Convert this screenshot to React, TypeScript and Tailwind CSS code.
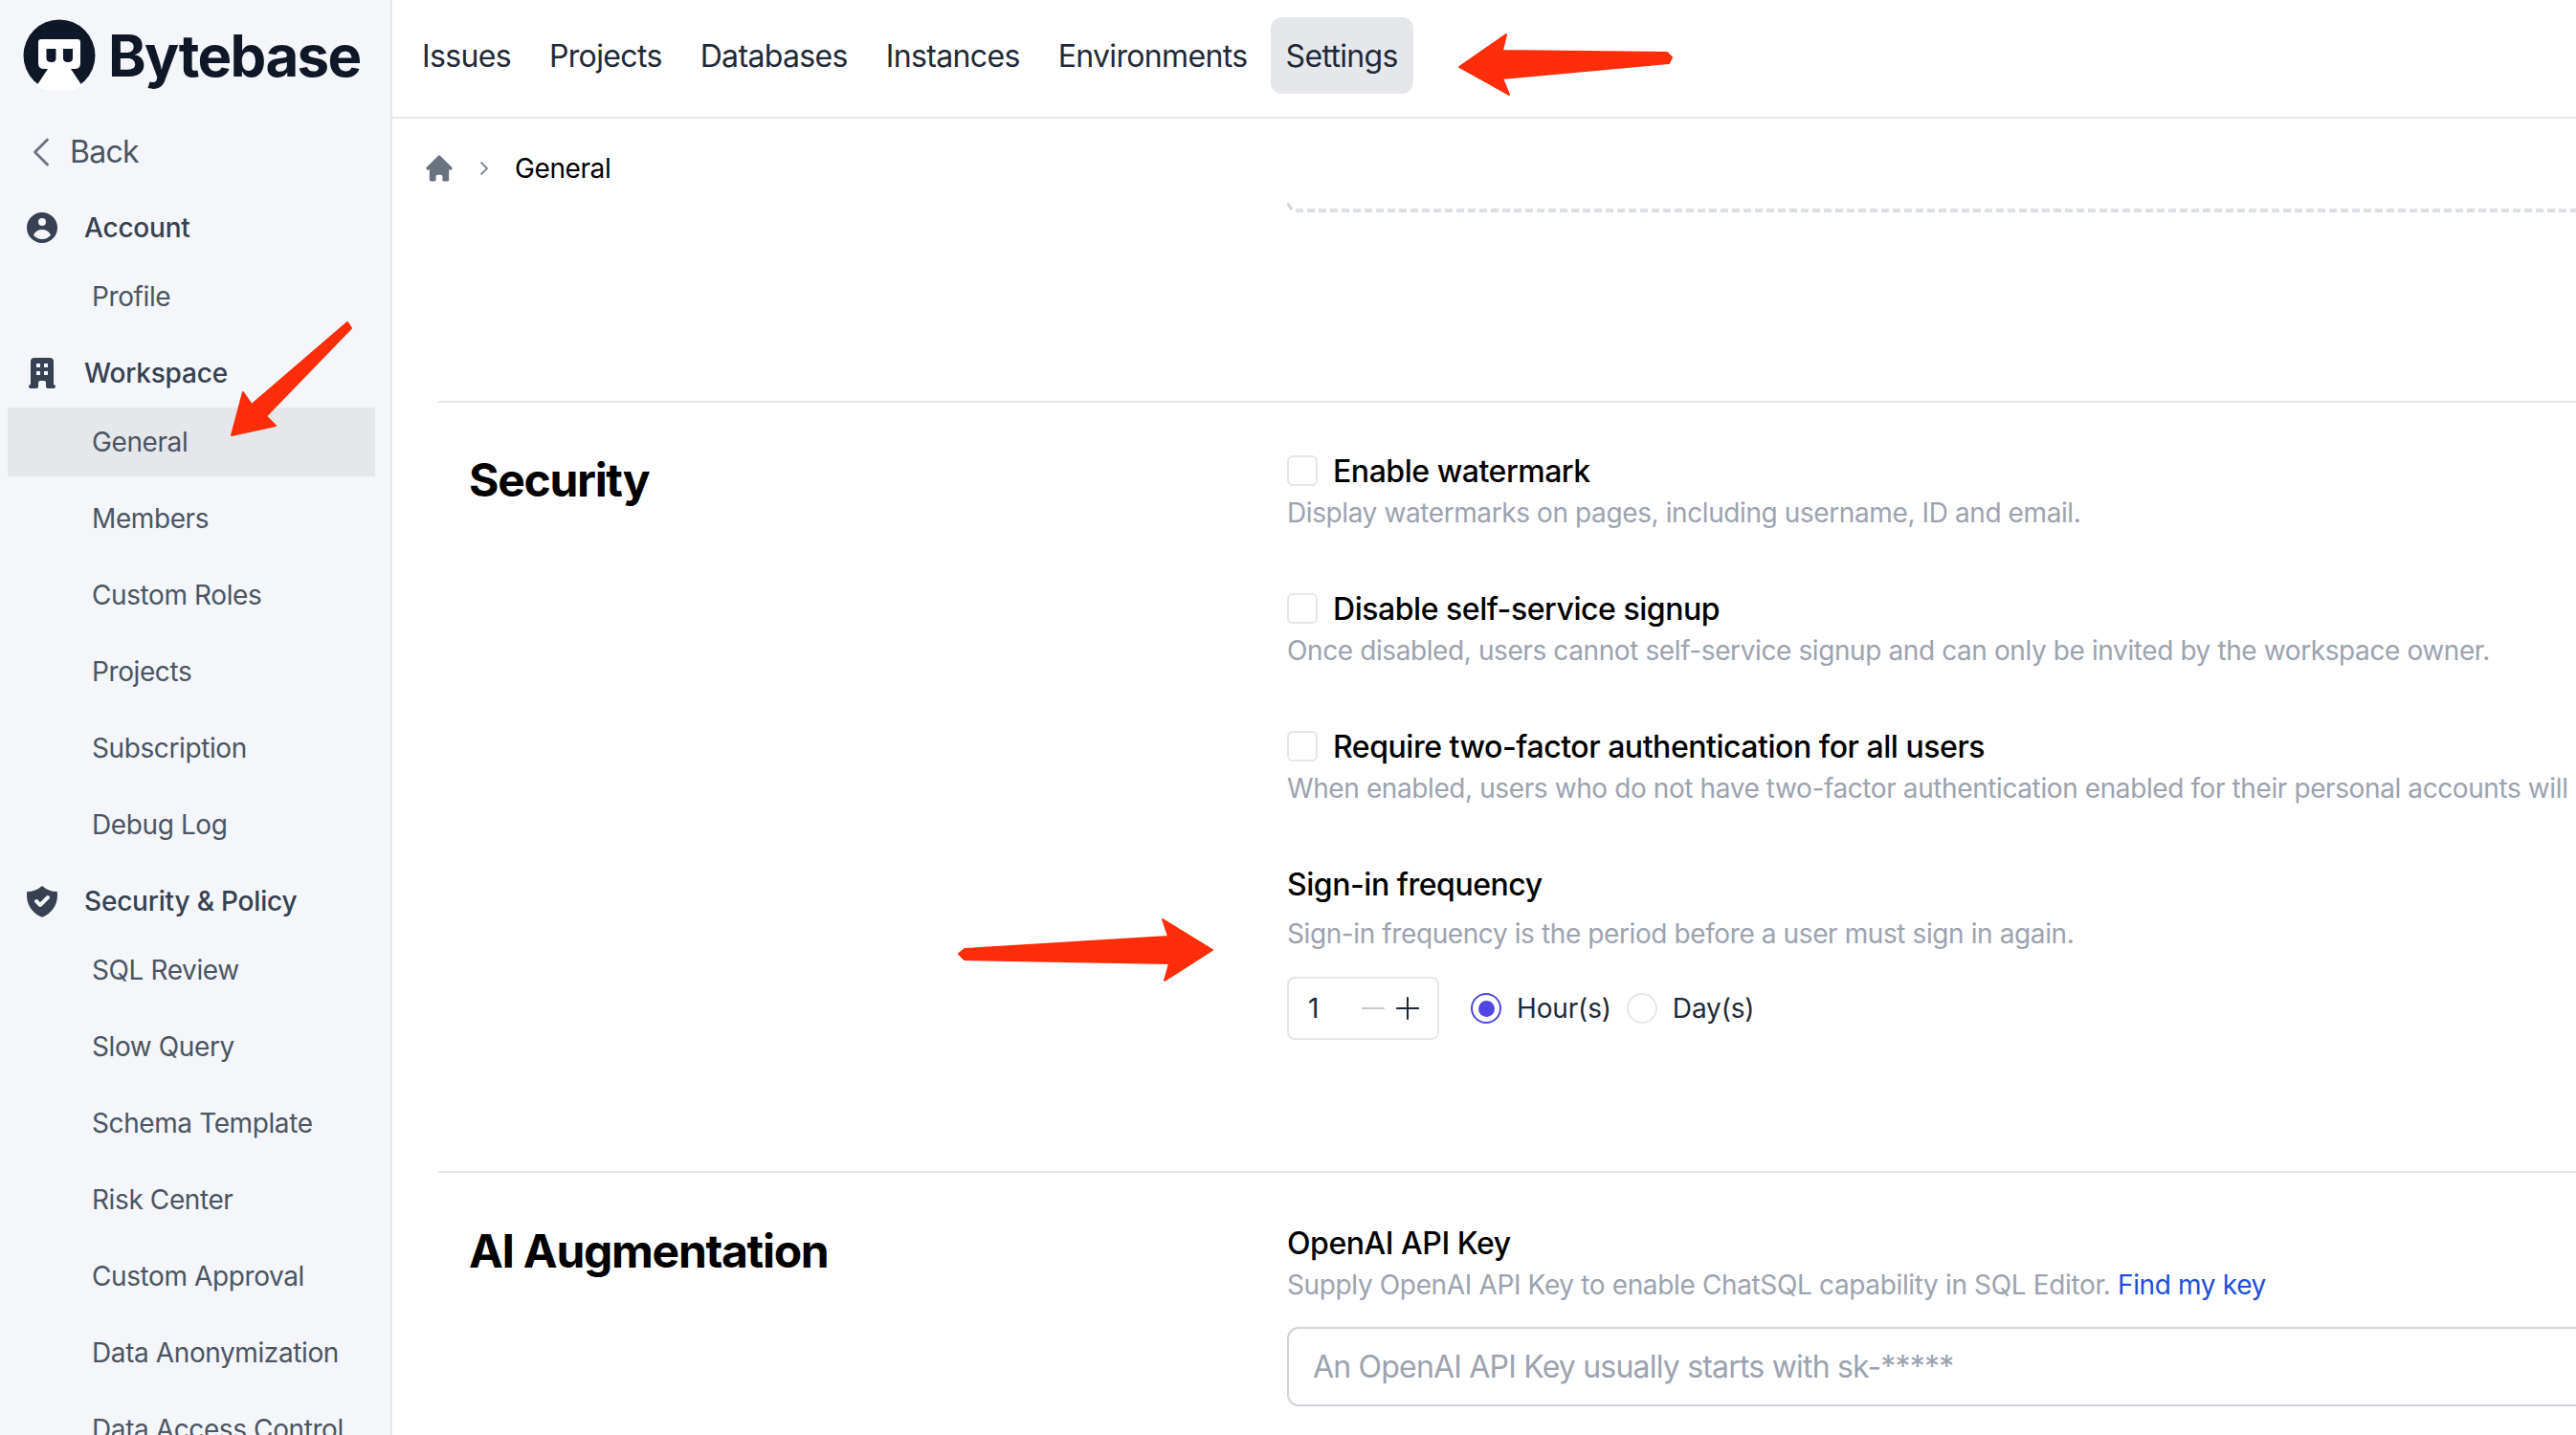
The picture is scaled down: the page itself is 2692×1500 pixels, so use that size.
import React from "react";
import { HiUserCircle, HiOfficeBuilding, HiShieldCheck, HiHome } from "react-icons/hi";
import { ChevronLeft, ChevronRight, Minus, Plus } from "lucide-react";

function Logo() {
  return (
    <svg width="76" height="76" viewBox="0 0 76 76" className="shrink-0">
      <circle cx="38" cy="38" r="37.5" fill="#101828" />
      <path d="M16 24 Q16 21 19 21 L57 21 Q60 21 60 24 L60 46 Q60 52 54 52 L50 52 L62 70 Q50 76 38 76 Q26 76 14 70 L26 52 L22 52 Q16 52 16 46 Z" fill="#fff" />
      <path d="M24.5 31 L34.5 31 L34.5 41 Q34.5 45 30 45 Q24.5 45 24.5 41 Z" fill="#101828" />
      <path d="M42 31 L52 31 L52 41 Q52 45 47 45 Q42 45 42 41 Z" fill="#101828" />
    </svg>
  );
}

function Group({ icon, label }: { icon: React.ReactNode; label: string }) {
  return (
    <div className="flex h-[72px] shrink-0 items-center text-[28px] font-medium tracking-[-0.2px] text-[#374151]">
      <span className="flex w-[88px] shrink-0 justify-center">{icon}</span>
      <span>{label}</span>
    </div>
  );
}

function Item({ label, active, top }: { label: string; active?: boolean; top?: boolean }) {
  return (
    <div
      className={
        "flex h-[72px] w-[384px] shrink-0 items-center pl-[88px] text-[28px] tracking-[-0.4px] text-[#4b5563] " +
        (active ? "bg-[#e5e7eb] " : "") +
        (top ? "mt-2" : "")
      }
    >
      {label}
    </div>
  );
}

function Sidebar() {
  return (
    <aside className="flex h-[1500px] w-[410px] shrink-0 flex-col overflow-hidden border-r-2 border-[#e5e7eb] bg-[#f4f6f9] pl-2">
      <div className="-ml-2 flex h-[114px] shrink-0 items-start gap-[13px] pl-[24px] pt-[20px]">
        <Logo />
        <span className="text-[60px] leading-[76px] font-bold tracking-[-1.6px] text-[#101828]">Bytebase</span>
      </div>
      <div className="-ml-2 flex h-[88px] shrink-0 items-center pl-[17px] pt-[2px] text-[32px] tracking-[-0.7px] text-[#4b5563]">
        <ChevronLeft size={52} strokeWidth={1.3} className="mr-[4px] text-[#6b7280]" />
        Back
      </div>
      <div className="-ml-2 shrink-0">
        <Group icon={<HiUserCircle size={40} />} label="Account" />
      </div>
      <Item label="Profile" />
      <div className="-ml-2 mt-2 shrink-0">
        <Group icon={<HiOfficeBuilding size={40} />} label="Workspace" />
      </div>
      <Item label="General" active />
      <Item label="Members" top />
      <Item label="Custom Roles" top />
      <Item label="Projects" top />
      <Item label="Subscription" top />
      <Item label="Debug Log" top />
      <div className="-ml-2 mt-2 shrink-0">
        <Group icon={<HiShieldCheck size={40} />} label="Security &amp; Policy" />
      </div>
      <Item label="SQL Review" />
      <Item label="Slow Query" top />
      <Item label="Schema Template" top />
      <Item label="Risk Center" top />
      <Item label="Custom Approval" top />
      <Item label="Data Anonymization" top />
      <Item label="Data Access Control" top />
    </aside>
  );
}

function TopNav() {
  const items = ["Issues", "Projects", "Databases", "Instances", "Environments", "Settings"];
  return (
    <nav className="flex h-[124px] shrink-0 items-start gap-2 border-b-2 border-[#e5e7eb] pl-[15px] pt-[18px] text-[32px] tracking-[-0.65px] text-[#1f2937]">
      {items.map((t) => (
        <div
          key={t}
          className={"flex h-[80px] items-center rounded-[12px] px-4 pt-[2px] " + (t === "Settings" ? "bg-[#e5e7eb]" : "")}
        >
          {t}
        </div>
      ))}
    </nav>
  );
}

function CheckRow({ label, desc }: { label: string; desc: string }) {
  return (
    <div className="mb-[58px]">
      <div className="flex h-[44px] items-center gap-[16px] text-[32px] font-medium tracking-[-0.46px] text-black">
        <span className="h-[32px] w-[32px] shrink-0 rounded-[6px] border-2 border-[#e5e7eb] bg-white" />
        <span className="pt-[2px]">{label}</span>
      </div>
      <div className="h-[42px] pt-[1px] text-[28px] leading-[42px] tracking-[-0.4px] whitespace-nowrap text-[#9ca3af]">{desc}</div>
    </div>
  );
}

function Section({ title, titleTop, children }: { title: string; titleTop: string; children: React.ReactNode }) {
  return (
    <section className="flex border-t-2 border-[#e5e7eb]">
      <div className={"w-[887px] shrink-0 pl-[32px] " + titleTop}>
        <h2 className="text-[48px] leading-[64px] font-bold tracking-[-1.28px] text-black">{title}</h2>
      </div>
      <div className="min-w-[1400px]">{children}</div>
    </section>
  );
}

function Radio({ label, on }: { label: string; on?: boolean }) {
  return (
    <div className="flex items-center gap-[16px] text-[28px] tracking-[-0.15px] text-[#1f2937]">
      <span
        className={
          "flex h-[32px] w-[32px] items-center justify-center rounded-full border-2 bg-white " +
          (on ? "border-[#4f46e5]" : "border-[#e5e7eb]")
        }
      >
        {on && <span className="h-[17px] w-[17px] rounded-full bg-[#4f46e5]" />}
      </span>
      {label}
    </div>
  );
}

function Arrow({ className, points, w, h }: { className: string; points: string; w: number; h: number }) {
  return (
    <svg className={"absolute " + className} width={w} height={h} viewBox={`0 0 ${w} ${h}`}>
      <polygon points={points} fill="#ff2d0a" stroke="#ff2d0a" strokeWidth="2" strokeLinejoin="round" />
    </svg>
  );
}

export default function App() {
  return (
    <div className="relative flex h-[1500px] w-[2692px] overflow-hidden bg-white font-['Inter',sans-serif]">
      <Sidebar />
      <main className="flex min-w-0 flex-1 flex-col">
        <TopNav />
        <div className="flex h-[88px] shrink-0 items-center pl-[32px] pt-[16px] text-[28px] tracking-[-0.4px] text-black">
          <HiHome size={34} className="text-[#6b7280]" />
          <ChevronRight size={24} strokeWidth={1.75} className="ml-[18px] text-[#6b7280]" />
          <span className="ml-[20px]">General</span>
        </div>
        <div className="ml-[934px] flex h-[10px] shrink-0 items-end">
          <svg width="8" height="8" viewBox="0 0 8 8" className="mb-[2px] shrink-0">
            <line x1="1.5" y1="0.5" x2="6" y2="7" stroke="#d1d5db" strokeWidth="3" />
          </svg>
          <div className="ml-[2px] h-[4px] w-[1340px] bg-[repeating-linear-gradient(90deg,#dcdfe3_0_8px,transparent_8px_12px)]" />
        </div>
        <div className="h-[197px] shrink-0" />
        <div className="ml-[48px]">
          <Section title="Security" titleTop="pt-[49px]">
            <div className="pt-[49px]">
              <CheckRow label="Enable watermark" desc="Display watermarks on pages, including username, ID and email." />
              <CheckRow label="Disable self-service signup" desc="Once disabled, users cannot self-service signup and can only be invited by the workspace owner." />
              <CheckRow label="Require two-factor authentication for all users" desc="When enabled, users who do not have two-factor authentication enabled for their personal accounts will" />
              <div className="flex h-[44px] items-center pt-[2px] text-[32px] font-medium tracking-[-0.46px] text-black">Sign-in frequency</div>
              <div className="mt-[9px] h-[42px] text-[28px] leading-[42px] tracking-[-0.4px] text-[#9ca3af]">Sign-in frequency is the period before a user must sign in again.</div>
              <div className="mt-[24px] mb-[137px] flex items-center">
                <div className="flex h-[66px] w-[159px] items-center rounded-[8px] border-2 border-[#e5e7eb] pl-[20px] text-[28px] text-[#1f2937]">
                  <span className="w-[49px] shrink-0">1</span>
                  <Minus size={38} strokeWidth={1.3} className="shrink-0 text-[#c9cbcf]" />
                  <Plus size={38} strokeWidth={1.3} className="-ml-[2px] shrink-0 text-[#1f2937]" />
                </div>
                <div className="ml-[33px] flex items-center gap-[16px]">
                  <Radio label="Hour(s)" on />
                  <Radio label="Day(s)" />
                </div>
              </div>
            </div>
          </Section>
          <Section title="AI Augmentation" titleTop="pt-[50px]">
            <div className="pt-[52px]">
              <div className="flex h-[44px] items-center text-[32px] font-medium tracking-[-0.46px] text-black">OpenAI API Key</div>
              <div className="h-[42px] text-[28px] leading-[42px] tracking-[-0.36px] text-[#9ca3af]">
                Supply OpenAI API Key to enable ChatSQL capability in SQL Editor.{" "}
                <span className="text-[#1d4ed8]">Find my key</span>
              </div>
              <div className="mt-[23px] flex h-[83px] w-[1400px] items-center rounded-[12px] border-2 border-[#d1d5db] pl-[25px] text-[32px] tracking-[-0.8px] text-[#9ca3af]">
                An OpenAI API Key usually starts with sk-*****
              </div>
            </div>
          </Section>
        </div>
      </main>
      <Arrow className="left-[1520px] top-[30px]" w={234} h={74} points="5,40 54,6 50,23 222,25 227,30 224,36 50,52 57,69" />
      <Arrow className="left-[236px] top-[332px]" w={136} h={128} points="6,123 18,78 27,91 127,5 131,11 42,103 52,113" />
      <Arrow className="left-[996px] top-[955px]" w={276} h={74} points="271,38 219,6 225,24 12,37 6,42 12,48 226,52 221,70" />
    </div>
  );
}
